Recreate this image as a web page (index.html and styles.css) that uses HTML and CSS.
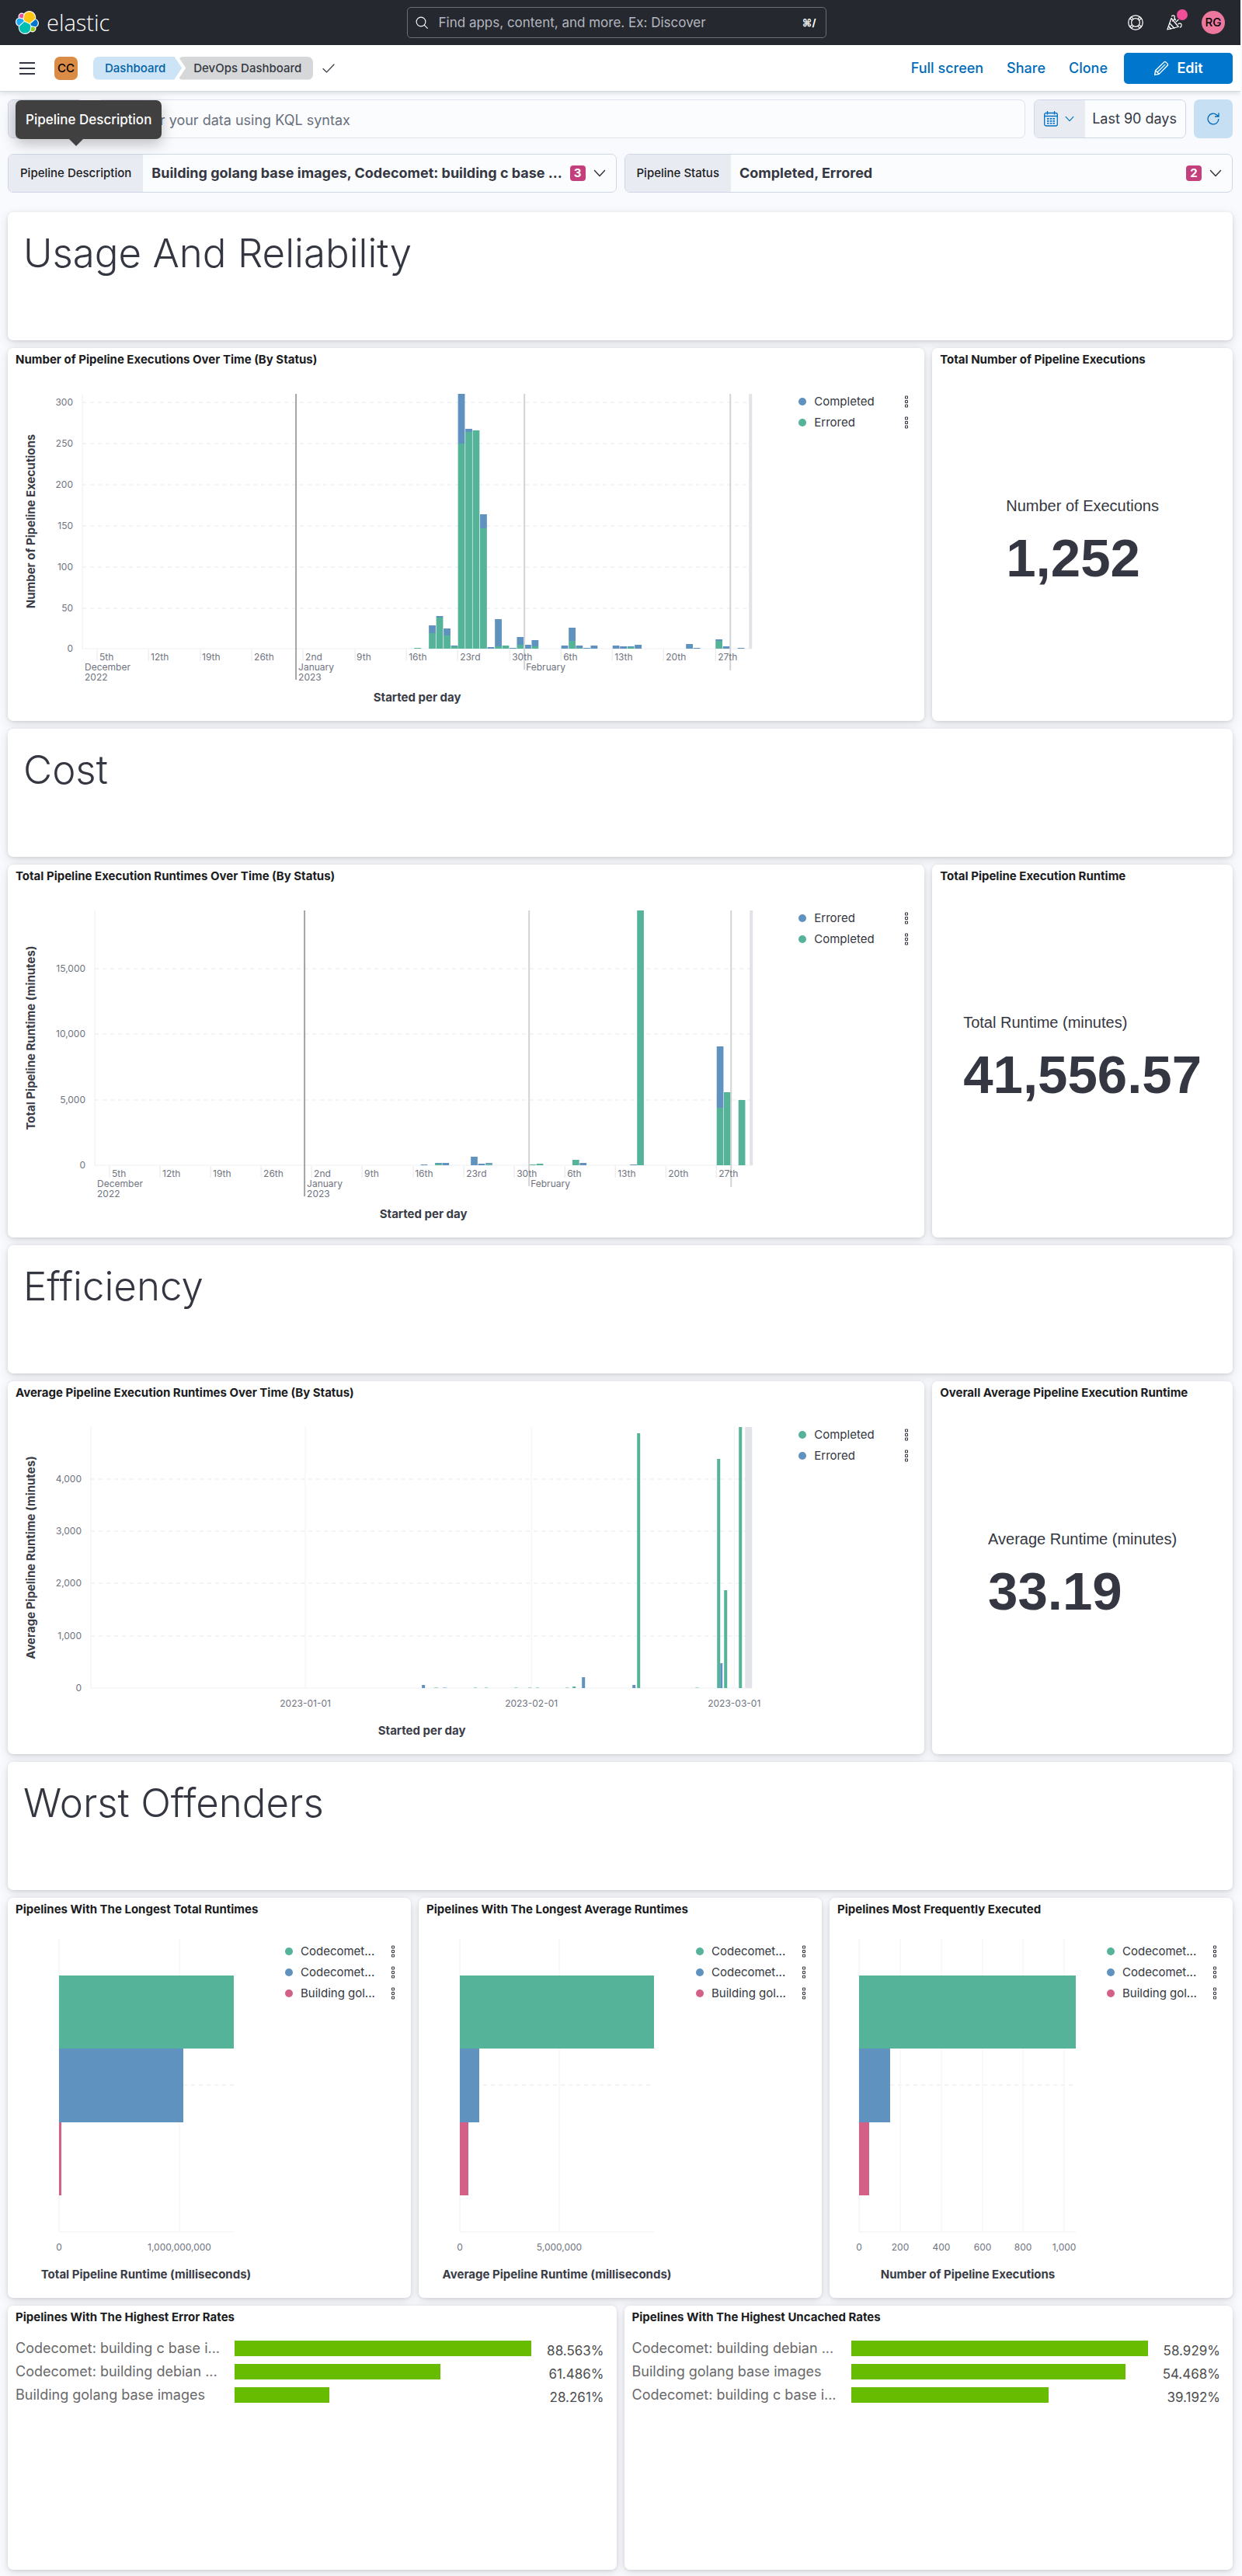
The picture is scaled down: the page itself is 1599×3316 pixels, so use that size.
FILE: index.html
```html
<!DOCTYPE html>
<html lang="en">
<head>
<meta charset="utf-8">
<meta name="viewport" content="width=device-width, initial-scale=1">
<title>DevOps Dashboard - Elastic</title>
<link rel="stylesheet" href="styles.css">
</head>
<body>
<svg class="sprite" aria-hidden="true">
  <symbol id="chevron" viewBox="0 0 16 16"><path d="M1.5 4.5l6.5 7 6.5-7" fill="none" stroke="currentColor" stroke-width="1.5" stroke-linecap="round" stroke-linejoin="round"/></symbol>
  <symbol id="dots" viewBox="0 0 16 16"><path d="M6.500 1h3v3h-3zM6.500 6.500h3v3h-3zM6.500 12h3v3h-3z" fill="none" stroke="currentColor" stroke-width="1"/></symbol>
</svg>

<header class="topbar">
  <a class="brand" href="#">
    <svg class="brand-mark" viewBox="0 0 32 32" aria-hidden="true">
      <path fill="#fff" d="M32 16.77c0-2.68-1.66-5.02-4.16-5.93.11-.57.16-1.14.16-1.73C28 4.1 23.92.02 18.9.02c-2.94 0-5.66 1.4-7.37 3.78a4.8 4.8 0 00-2.96-1.01 4.84 4.84 0 00-4.84 4.84c0 .58.1 1.14.3 1.66A6.36 6.36 0 000 15.24c0 2.69 1.67 5.04 4.18 5.94-.11.56-.16 1.13-.16 1.73 0 5.01 4.07 9.08 9.08 9.08 2.94 0 5.66-1.41 7.36-3.79a4.83 4.83 0 002.98 1.03 4.84 4.84 0 004.84-4.84c0-.58-.1-1.14-.3-1.66A6.38 6.38 0 0032 16.77"/>
      <path fill="#fec514" d="M12.58 13.79l7.01 3.2 7.08-6.2c.1-.51.15-1.03.15-1.57 0-4.34-3.53-7.86-7.87-7.86a7.86 7.86 0 00-6.5 3.44L11.28 10.9z"/>
      <path fill="#00bfb3" d="M5.33 21.22c-.1.51-.15 1.04-.15 1.58 0 4.35 3.54 7.89 7.89 7.89 2.62 0 5.06-1.3 6.53-3.47l1.17-6.08-1.56-2.98-7.03-3.2z"/>
      <path fill="#f04e98" d="M5.29 9.09l4.8 1.13 1.05-5.46a3.79 3.79 0 00-6.09 3.03c0 .45.08.89.24 1.3"/>
      <path fill="#1ba9f5" d="M4.87 10.23a5.35 5.35 0 00-3.53 5.03c0 2.21 1.36 4.19 3.42 4.98l6.74-6.09-1.24-2.64z"/>
      <path fill="#93c90e" d="M20.87 27.22a3.77 3.77 0 002.29.79 3.79 3.79 0 003.79-3.79c0-.46-.08-.89-.24-1.3l-4.8-1.12z"/>
      <path fill="#07c" d="M21.84 20.48l5.28 1.24a5.38 5.38 0 003.54-5.03c0-2.21-1.37-4.18-3.42-4.96l-6.9 6.05z"/>
    </svg>
    <span class="brand-name">elastic</span>
  </a>
  <label class="global-search">
    <svg class="icon-16" viewBox="0 0 16 16" aria-hidden="true"><g fill="none" stroke="currentColor" stroke-width="1.1" stroke-linecap="round"><circle cx="7" cy="7" r="5.9"/><path d="M11.3 11.3l4 4"/></g></svg>
    <input type="search" class="global-search-input" aria-label="Find apps and content" placeholder="Find apps, content, and more. Ex: Discover">
    <kbd class="shortcut">⌘/</kbd>
  </label>
  <nav class="top-actions" aria-label="Account">
    <button class="top-button" type="button" aria-label="Help">
      <svg class="icon-20" viewBox="0 0 16 16" aria-hidden="true"><g fill="none" stroke="currentColor"><circle cx="8" cy="8" r="7.4"/><circle cx="8" cy="8" r="4.3"/><path d="M3.4 1.9l2.2 2.4M1.9 3.4l2.4 2.2M12.6 1.9l-2.2 2.4M14.1 3.4l-2.4 2.2M3.4 14.1l2.2-2.4M1.9 12.6l2.4-2.2M12.6 14.1l-2.2-2.4M14.1 12.6l-2.4-2.2"/></g></svg>
    </button>
    <button class="top-button" type="button" aria-label="What's new">
      <svg class="icon-20" viewBox="0 0 16 16" aria-hidden="true"><g fill="none" stroke="currentColor" stroke-linejoin="round" stroke-linecap="round"><path d="M.7 15.2l4.1-11.6 7.4 8.8z"/><path d="M3.3 9l4.5 4.8M2.2 12l2.2 2.6M6 6.5l2.6-2.3M5.3 1.4c1.5-1.5 3.3-.3 2.8 1.2-.4 1.300 1 1.600 1 2.900M9.700 7.200l2.300-2M12 9.500c1-1.200 3.400-.6 3.300 1.200 0 1.400-.8 2-1.500 2.200"/></g></svg>
      <span class="news-dot"></span>
    </button>
    <button class="avatar" type="button" aria-label="Account menu">RG</button>
  </nav>
</header>

<div class="navbar">
  <button class="plain-button" type="button" aria-label="Toggle navigation">
    <svg class="icon-20" viewBox="0 0 20 20" aria-hidden="true"><path d="M0 3h20M0 10h20M0 17h20" stroke="currentColor" stroke-width="2"/></svg>
  </button>
  <button class="space" type="button" aria-label="Space">CC</button>
  <nav class="crumbs" aria-label="Breadcrumbs">
    <a class="crumb crumb-first" href="#">Dashboard</a>
    <span class="crumb crumb-last" aria-current="page">DevOps Dashboard</span>
  </nav>
  <svg class="icon-16 saved" viewBox="0 0 16 16" aria-hidden="true"><path d="M1 8.500l4.500 4.500L15 3" fill="none" stroke="currentColor" stroke-width="1.200" stroke-linecap="round"/></svg>
  <nav class="nav-links" aria-label="Dashboard actions">
    <a href="#">Full screen</a>
    <a href="#">Share</a>
    <a href="#">Clone</a>
  </nav>
  <button class="edit-button" type="button">
    <svg class="icon-20" viewBox="0 0 16 16" aria-hidden="true"><path d="M1.300 14.700l.8-4.500 8.700-8.500a1.500 1.500 0 012.100 0l1.400 1.400a1.500 1.500 0 010 2.100l-8.600 8.700zM2.200 10.300l3.500 3.500M4.200 11.800l7.900-7.900" fill="none" stroke="currentColor" stroke-width="1.100" stroke-linejoin="round"/></svg>
    Edit
  </button>
</div>

<main class="page">
  <div class="query-row">
    <button class="filter-button" type="button" aria-label="Saved query menu"></button>
    <input class="query-input" type="text" aria-label="Query" placeholder="Filter your data using KQL syntax">
    <div class="date-picker">
      <button class="date-quick" type="button" aria-label="Date quick select">
        <svg class="icon-20" viewBox="0 0 18 20" aria-hidden="true"><g fill="none" stroke="currentColor" stroke-width="1.300"><rect x=".7" y="2.500" width="16.600" height="16.500" rx="2"/><path d="M1 6.500h16M4.500 0v4.500M13.500 0v4.500"/></g><path d="M4 9h2.500v1.800H4zM7.800 9h2.500v1.800H7.800zM11.500 9H14v1.800h-2.500zM4 12h2.500v1.800H4zM7.800 12h2.500v1.800H7.800zM11.500 12H14v1.800h-2.500zM4 15h2.500v1.500H4zM7.800 15h2.500v1.500H7.800zM11.500 15H14v1.500h-2.500z" fill="currentColor"/></svg>
        <svg class="icon-12" aria-hidden="true"><use href="#chevron"/></svg>
      </button>
      <button class="date-range" type="button">Last 90 days</button>
    </div>
    <button class="refresh" type="button" aria-label="Refresh">
      <svg class="icon-16" viewBox="0 0 16 16" aria-hidden="true"><path d="M14.900 8A6.900 6.900 0 1 1 12.600 2.900L14.500 4.500M15 .2V5h-5" fill="none" stroke="currentColor" stroke-width="1.300"/></svg>
    </button>
  </div>

  <div class="control-row">
    <div class="control">
      <span class="control-label" id="lbl-desc">Pipeline Description</span>
      <button class="control-value" type="button" aria-labelledby="lbl-desc">
        <span class="control-text">Building golang base images, Codecomet: building c base ...</span>
        <span class="badge">3</span>
        <svg class="icon-16" aria-hidden="true"><use href="#chevron"/></svg>
      </button>
      <div class="tooltip" role="tooltip">Pipeline Description</div>
    </div>
    <div class="control">
      <span class="control-label" id="lbl-status">Pipeline Status</span>
      <button class="control-value" type="button" aria-labelledby="lbl-status">
        <span class="control-text">Completed, Errored</span>
        <span class="badge">2</span>
        <svg class="icon-16" aria-hidden="true"><use href="#chevron"/></svg>
      </button>
    </div>
  </div>

  <div class="dashboard">
    <section class="panel heading-panel"><h1>Usage And Reliability</h1></section>

    <div class="row row-wide">
      <section class="panel">
        <h2>Number of Pipeline Executions Over Time (By Status)</h2>
        <div class="chart">
          <svg class="plot" viewBox="0 0 1007 450" role="img" aria-label="Number of pipeline executions per day">
            <path class="grid dashed" d="M96 40H958M96 93H958M96 146H958M96 199H958M96 252H958M96 305H958"/>
            <path class="axis" d="M96 29V357H958"/>
            <path class="tickline" d="M115 358v15M181 358v15M248 358v15M314 358v15M380 358v15M447 358v15M513 358v15M579 358v15M646 358v15M712 358v15M778 358v15M844 358v15M911 358v15"/>
            <path class="band" d="M954 29h4V357h-4z"/>
            <path class="green" d="M523.100 357v-1h8.800v1zM542 357v-20h8.800v20zM551.500 357v-40h8.800v40zM561 357v-17h8.800v17zM570.400 357v-3h8.800v3zM579.500 357V93h8.800V357zM589 357V78h8.800V357zM598.400 357V76h8.800V357zM607.900 357V202h8.800V357zM627 357v-3h8.800v3zM636.400 357v-4h8.800v4zM655.300 357v-5h8.800v5zM674.300 357v-3h8.800v3zM722 357v-10h8.800v10zM731.300 357v-1h8.800v1zM797.500 357v-2h8.800v2zM911 357v-10h8.800v10z"/>
            <path class="blue" d="M542 337v-10h8.800v10zM551.500 317v-2h8.800v2zM561 340v-9h8.800v9zM570.400 354v-1h8.800v1zM579.500 93V29h8.800V93zM589 78v-4h8.800v4zM607.900 202v-18h8.800v18zM617.400 357v-2h8.800v2zM627 354v-35h8.800v35zM645.900 357v-1h8.800v1zM655.300 352v-10h8.800v10zM664.800 357v-5h8.800v5zM674.300 354v-8h8.800v8zM712.400 357v-4h8.800v4zM722 347v-17h8.800v17zM731.300 356v-3h8.800v3zM740.800 357v-1h8.800v1zM750.300 357v-4h8.800v4zM778.500 357v-4h8.800v4zM788 357v-3h8.800v3zM797.500 355v-1h8.800v1zM807 357v-5h8.800v5zM873 357v-6h8.800v6zM882.500 357v-1h8.800v1zM911 347v-2h8.800v2zM920.500 357v-3h8.800v3zM939.500 357v-1h8.800v1z"/>
            <path class="year-line" d="M371 29V397"/>
            <path class="month-line" d="M665 29V384M930 29V385"/>
            <g class="tick end"><text x="84" y="44">300</text><text x="84" y="97">250</text><text x="84" y="150">200</text><text x="84" y="203">150</text><text x="84" y="256">100</text><text x="84" y="309">50</text><text x="84" y="361">0</text></g>
            <g class="tick"><text x="118" y="372">5th</text><text x="184" y="372">12th</text><text x="250" y="372">19th</text><text x="317" y="372">26th</text><text x="383" y="372">2nd</text><text x="449" y="372">9th</text><text x="516" y="372">16th</text><text x="582" y="372">23rd</text><text x="649" y="372">30th</text><text x="715" y="372">6th</text><text x="781" y="372">13th</text><text x="847" y="372">20th</text><text x="914" y="372">27th</text><text x="99" y="385">December</text><text x="99" y="398">2022</text><text x="374" y="385">January</text><text x="374" y="398">2023</text><text x="667" y="385">February</text></g>
            <text class="axis-title" transform="translate(35 193) rotate(-90)">Number of Pipeline Executions</text>
            <text class="axis-title" x="527" y="425">Started per day</text>
          </svg>
          <ul class="legend">
            <li><i class="dot dot-blue"></i><span>Completed</span><button type="button" aria-label="Completed actions"><svg class="icon-16"><use href="#dots"/></svg></button></li>
            <li><i class="dot dot-green"></i><span>Errored</span><button type="button" aria-label="Errored actions"><svg class="icon-16"><use href="#dots"/></svg></button></li>
          </ul>
        </div>
      </section>
      <section class="panel">
        <h2>Total Number of Pipeline Executions</h2>
        <div class="metric"><div><p class="metric-label">Number of Executions</p><p class="metric-value">1,252</p></div></div>
      </section>
    </div>

    <section class="panel heading-panel"><h1>Cost</h1></section>

    <div class="row row-wide">
      <section class="panel">
        <h2>Total Pipeline Execution Runtimes Over Time (By Status)</h2>
        <div class="chart">
          <svg class="plot" viewBox="0 0 1007 450" role="img" aria-label="Total pipeline runtime per day">
            <path class="grid dashed" d="M112 104H958M112 188H958M112 273H958"/>
            <path class="axis" d="M112 29V357H958"/>
            <path class="tickline" d="M131 358v15M196 358v15M261 358v15M326 358v15M391 358v15M456 358v15M522 358v15M587 358v15M652 358v15M717 358v15M782 358v15M847 358v15M912 358v15"/>
            <path class="band" d="M955 29h4V357h-4z"/>
            <path class="green" d="M550 357v-2h8.700v2zM615 357v-1.500h8.700v1.500zM671 357v-1h8.700v1zM680.500 357v-2h8.700v2zM726.800 357v-7h8.700v7zM810 357V29h8.700V357zM912.500 357v-74h8.700v74zM921.800 357v-94h8.700v94zM940.500 357v-84h8.700v84z"/>
            <path class="blue" d="M531.500 357v-1h8.700v1zM550 355v-1h8.700v1zM559.300 357v-3h8.700v3zM596 357v-11h8.700v11zM605.500 357v-2h8.700v2zM615 355.500v-1.500h8.700v1.500zM736.200 357v-3h8.700v3zM801 357v-1h8.700v1zM912.500 283v-79h8.700v79z"/>
            <path class="year-line" d="M382 29V397"/>
            <path class="month-line" d="M671 29V384M931 29V385"/>
            <g class="tick end"><text x="100" y="108">15,000</text><text x="100" y="192">10,000</text><text x="100" y="277">5,000</text><text x="100" y="361">0</text></g>
            <g class="tick"><text x="134" y="372">5th</text><text x="199" y="372">12th</text><text x="264" y="372">19th</text><text x="329" y="372">26th</text><text x="394" y="372">2nd</text><text x="459" y="372">9th</text><text x="524" y="372">16th</text><text x="590" y="372">23rd</text><text x="655" y="372">30th</text><text x="720" y="372">6th</text><text x="785" y="372">13th</text><text x="850" y="372">20th</text><text x="915" y="372">27th</text><text x="115" y="385">December</text><text x="115" y="398">2022</text><text x="385" y="385">January</text><text x="385" y="398">2023</text><text x="673" y="385">February</text></g>
            <text class="axis-title" transform="translate(35 193) rotate(-90)">Total Pipeline Runtime (minutes)</text>
            <text class="axis-title" x="535" y="425">Started per day</text>
          </svg>
          <ul class="legend">
            <li><i class="dot dot-blue"></i><span>Errored</span><button type="button" aria-label="Errored actions"><svg class="icon-16"><use href="#dots"/></svg></button></li>
            <li><i class="dot dot-green"></i><span>Completed</span><button type="button" aria-label="Completed actions"><svg class="icon-16"><use href="#dots"/></svg></button></li>
          </ul>
        </div>
      </section>
      <section class="panel">
        <h2>Total Pipeline Execution Runtime</h2>
        <div class="metric"><div><p class="metric-label">Total Runtime (minutes)</p><p class="metric-value">41,556.57</p></div></div>
      </section>
    </div>

    <section class="panel heading-panel"><h1>Efficiency</h1></section>

    <div class="row row-wide">
      <section class="panel">
        <h2>Average Pipeline Execution Runtimes Over Time (By Status)</h2>
        <div class="chart">
          <svg class="plot" viewBox="0 0 1007 450" role="img" aria-label="Average pipeline runtime per day">
            <path class="grid dashed" d="M107 96H958M107 163H958M107 230H958M107 298H958"/>
            <path class="grid" d="M383 29V365M674 29V365M935 29V365"/>
            <path class="axis" d="M107 29V365H958"/>
            <path class="band" d="M949 29h9V365h-9z"/>
            <path class="green" d="M549 365v-.7h5v.7zM600 365v-.7h4v.7zM614 365v-.7h4v.7zM652 365v-.7h4v.7zM670 365v-.7h4v.7zM680 365v-.7h4v.7zM718 365v-.7h4v.7zM727 365v-2h4v2zM810 365V37h4V365zM885 365v-.7h4v.7zM913 365V70h4V365zM922 365V239h4V365zM941 365V29h4V365z"/>
            <path class="blue" d="M533 365v-4h4v4zM560 365v-.7h5v.7zM739 365v-14h4v14zM804 365v-4h4v4zM917 365v-32h3v32z"/>
            <g class="tick end"><text x="95" y="100">4,000</text><text x="95" y="167">3,000</text><text x="95" y="234">2,000</text><text x="95" y="302">1,000</text><text x="95" y="369">0</text></g>
            <g class="tick middle"><text x="383" y="389">2023-01-01</text><text x="674" y="389">2023-02-01</text><text x="935" y="389">2023-03-01</text></g>
            <text class="axis-title" transform="translate(35 197) rotate(-90)">Average Pipeline Runtime (minutes)</text>
            <text class="axis-title" x="533" y="425">Started per day</text>
          </svg>
          <ul class="legend">
            <li><i class="dot dot-green"></i><span>Completed</span><button type="button" aria-label="Completed actions"><svg class="icon-16"><use href="#dots"/></svg></button></li>
            <li><i class="dot dot-blue"></i><span>Errored</span><button type="button" aria-label="Errored actions"><svg class="icon-16"><use href="#dots"/></svg></button></li>
          </ul>
        </div>
      </section>
      <section class="panel">
        <h2>Overall Average Pipeline Execution Runtime</h2>
        <div class="metric"><div><p class="metric-label">Average Runtime (minutes)</p><p class="metric-value">33.19</p></div></div>
      </section>
    </div>

    <section class="panel heading-panel"><h1>Worst Offenders</h1></section>

    <div class="row row-thirds">
      <section class="panel">
        <h2>Pipelines With The Longest Total Runtimes</h2>
        <div class="chart">
          <svg class="plot" viewBox="0 0 346 485" role="img" aria-label="Pipelines by total runtime">
            <path class="grid" d="M221 23V399"/><path class="grid dashed" d="M66 211H291"/>
            <path class="axis" d="M66 23V400H291"/>
            <path class="green" d="M66 70h225v94H66z"/><path class="blue" d="M66 164h160v95H66z"/><path class="pink" d="M66 259h3v94h-3z"/>
            <g class="tick middle"><text x="66" y="424">0</text><text x="221" y="424">1,000,000,000</text></g>
            <text class="axis-title" x="178" y="460">Total Pipeline Runtime (milliseconds)</text>
          </svg>
          <ul class="legend">
            <li><i class="dot dot-green"></i><span>Codecomet...</span><button type="button" aria-label="Series actions"><svg class="icon-16"><use href="#dots"/></svg></button></li>
            <li><i class="dot dot-blue"></i><span>Codecomet...</span><button type="button" aria-label="Series actions"><svg class="icon-16"><use href="#dots"/></svg></button></li>
            <li><i class="dot dot-pink"></i><span>Building gol...</span><button type="button" aria-label="Series actions"><svg class="icon-16"><use href="#dots"/></svg></button></li>
          </ul>
        </div>
      </section>
      <section class="panel">
        <h2>Pipelines With The Longest Average Runtimes</h2>
        <div class="chart">
          <svg class="plot" viewBox="0 0 346 485" role="img" aria-label="Pipelines by average runtime">
            <path class="grid" d="M181 23V399"/><path class="grid dashed" d="M53 211H303"/>
            <path class="axis" d="M53 23V400H303"/>
            <path class="green" d="M53 70h250v94H53z"/><path class="blue" d="M53 164h25v95H53z"/><path class="pink" d="M53 259h11v94H53z"/>
            <g class="tick middle"><text x="53" y="424">0</text><text x="181" y="424">5,000,000</text></g>
            <text class="axis-title" x="178" y="460">Average Pipeline Runtime (milliseconds)</text>
          </svg>
          <ul class="legend">
            <li><i class="dot dot-green"></i><span>Codecomet...</span><button type="button" aria-label="Series actions"><svg class="icon-16"><use href="#dots"/></svg></button></li>
            <li><i class="dot dot-blue"></i><span>Codecomet...</span><button type="button" aria-label="Series actions"><svg class="icon-16"><use href="#dots"/></svg></button></li>
            <li><i class="dot dot-pink"></i><span>Building gol...</span><button type="button" aria-label="Series actions"><svg class="icon-16"><use href="#dots"/></svg></button></li>
          </ul>
        </div>
      </section>
      <section class="panel">
        <h2>Pipelines Most Frequently Executed</h2>
        <div class="chart">
          <svg class="plot" viewBox="0 0 346 485" role="img" aria-label="Pipelines by number of executions">
            <path class="grid" d="M91 23V399M144 23V399M197 23V399M249 23V399M302 23V399"/><path class="grid dashed" d="M38 211H317"/>
            <path class="axis" d="M38 23V400H317"/>
            <path class="green" d="M38 70h279v94H38z"/><path class="blue" d="M38 164h40v95H38z"/><path class="pink" d="M38 259h13v94H38z"/>
            <g class="tick middle"><text x="38" y="424">0</text><text x="91" y="424">200</text><text x="144" y="424">400</text><text x="197" y="424">600</text><text x="249" y="424">800</text><text x="302" y="424">1,000</text></g>
            <text class="axis-title" x="178" y="460">Number of Pipeline Executions</text>
          </svg>
          <ul class="legend">
            <li><i class="dot dot-green"></i><span>Codecomet...</span><button type="button" aria-label="Series actions"><svg class="icon-16"><use href="#dots"/></svg></button></li>
            <li><i class="dot dot-blue"></i><span>Codecomet...</span><button type="button" aria-label="Series actions"><svg class="icon-16"><use href="#dots"/></svg></button></li>
            <li><i class="dot dot-pink"></i><span>Building gol...</span><button type="button" aria-label="Series actions"><svg class="icon-16"><use href="#dots"/></svg></button></li>
          </ul>
        </div>
      </section>
    </div>

    <div class="row row-halves">
      <section class="panel">
        <h2>Pipelines With The Highest Error Rates</h2>
        <ul class="rates">
          <li><span class="rate-name">Codecomet: building c base i...</span><span class="rate-track"><span class="rate-bar" style="width:100%"></span></span><span class="rate-value">88.563%</span></li>
          <li><span class="rate-name">Codecomet: building debian ...</span><span class="rate-track"><span class="rate-bar" style="width:69.4%"></span></span><span class="rate-value">61.486%</span></li>
          <li><span class="rate-name">Building golang base images</span><span class="rate-track"><span class="rate-bar" style="width:31.9%"></span></span><span class="rate-value">28.261%</span></li>
        </ul>
      </section>
      <section class="panel">
        <h2>Pipelines With The Highest Uncached Rates</h2>
        <ul class="rates">
          <li><span class="rate-name">Codecomet: building debian ...</span><span class="rate-track"><span class="rate-bar" style="width:100%"></span></span><span class="rate-value">58.929%</span></li>
          <li><span class="rate-name">Building golang base images</span><span class="rate-track"><span class="rate-bar" style="width:92.4%"></span></span><span class="rate-value">54.468%</span></li>
          <li><span class="rate-name">Codecomet: building c base i...</span><span class="rate-track"><span class="rate-bar" style="width:66.5%"></span></span><span class="rate-value">39.192%</span></li>
        </ul>
      </section>
    </div>
  </div>
</main>
</body>
</html>
```
FILE: styles.css
```css
* { box-sizing: border-box; }
body {
  margin: 0 2px 0 0;
  background: #f9fafe;
  color: #343741;
  font-family: Inter, "Liberation Sans", sans-serif;
  font-size: 18px;
  line-height: 24px;
}
button, input { font: inherit; color: inherit; }
button { border: 0; padding: 0; background: none; cursor: pointer; }
a { color: inherit; text-decoration: none; }
ul { list-style: none; margin: 0; padding: 0; }
h1, h2, p { margin: 0; }
svg { display: block; flex: none; }
.sprite { width: 0; height: 0; position: absolute; }
.icon-12 { width: 12px; height: 12px; }
.icon-16 { width: 16px; height: 16px; }
.icon-20 { width: 20px; height: 20px; }

.topbar {
  display: grid;
  grid-template-columns: 1fr 540px 1fr;
  align-items: center;
  height: 58px;
  padding: 0 20px 0 10px;
  background: #25282f;
  color: #fff;
  font-size: 17px;
}
.brand { display: flex; align-items: center; gap: 10px; padding-left: 10px; }
.brand-mark { width: 30px; height: 30px; }
.brand-name { font-family: "Open Sans", sans-serif; font-weight: 300; font-size: 29px; line-height: 30px; }
.global-search {
  display: flex;
  align-items: center;
  gap: 14px;
  height: 40px;
  padding: 0 12px 0 10px;
  border: 1px solid #6b6e76;
  border-radius: 5px;
}
.global-search-input {
  flex: 1;
  min-width: 0;
  padding: 0;
  border: 0;
  outline: 0;
  background: none;
}
.global-search-input::placeholder { color: #b4b7bf; opacity: 1; }
.shortcut { font-family: inherit; font-size: 13px; font-weight: 700; }
.top-actions { display: flex; justify-content: flex-end; align-items: center; gap: 30px; }
.top-button { position: relative; }
.news-dot {
  position: absolute;
  top: -7px;
  right: -7px;
  width: 14px;
  height: 14px;
  border-radius: 50%;
  background: #f04e98;
}
.avatar {
  width: 30px;
  height: 30px;
  margin-left: -5px;
  border-radius: 50%;
  background: #ee789d;
  color: #000;
  font-size: 15px;
  font-weight: 500;
}

.navbar {
  position: relative;
  display: flex;
  align-items: center;
  height: 60px;
  padding: 0 10px 0 25px;
  border-bottom: 1px solid #d3dae6;
  background: #fff;
  box-shadow: 0 2px 6px rgba(0, 0, 0, .12);
}
.space {
  width: 30px;
  height: 30px;
  margin: 0 20px 0 25px;
  border-radius: 7px;
  background: #da8b45;
  color: #000;
  font-size: 15px;
  font-weight: 500;
}
.crumbs { display: flex; font-size: 15px; font-weight: 500; line-height: 30px; }
.crumb { border-radius: 7px; }
.crumb-first {
  padding: 0 21px 0 15px;
  background: #cce4f5;
  color: #0061a6;
  clip-path: polygon(0 0, calc(100% - 10px) 0, 100% 50%, calc(100% - 10px) 100%, 0 100%);
}
.crumb-last {
  margin-left: -5px;
  padding: 0 15px 0 20px;
  background: #d6d7d9;
  clip-path: polygon(0 0, 100% 0, 100% 100%, 0 100%, 10px 50%);
}
.saved { margin-left: 12px; }
.nav-links {
  display: flex;
  gap: 30px;
  margin: 0 21px 0 auto;
  color: #006bb8;
  font-weight: 500;
}
.edit-button {
  display: flex;
  align-items: center;
  justify-content: center;
  gap: 10px;
  width: 140px;
  height: 40px;
  border-radius: 5px;
  background: #0077cc;
  color: #fff;
  font-weight: 600;
}

.page { padding: 10px 10px 8px; }
.query-row { display: flex; height: 50px; }
.filter-button { width: 97px; margin-right: 18px; border: 1px solid #cfd6e6; border-radius: 7px; background: #e9ebf3; }
.query-input {
  flex: 1;
  min-width: 0;
  margin-right: 11px;
  padding: 3px 15px 0 44px;
  border: 1px solid #dfe3ee;
  border-radius: 7px;
  background: #fbfcfe;
  outline: 0;
}
.query-input::placeholder { color: #69707d; opacity: 1; }
.date-picker {
  display: flex;
  margin-right: 10px;
  border: 1px solid #cfd6e6;
  border-radius: 7px;
  background: #fbfcfe;
  overflow: hidden;
}
.date-quick {
  display: flex;
  align-items: center;
  gap: 8px;
  padding: 0 14px 0 11px;
  background: #e9ebf3;
  color: #0071c2;
}
.date-range { padding: 0 11px 0 9px; white-space: nowrap; }
.refresh {
  display: flex;
  align-items: center;
  justify-content: center;
  width: 50px;
  border-radius: 7px;
  background: #c6dff2;
  color: #006bb8;
}

.control-row { display: grid; grid-template-columns: 1fr 1fr; gap: 10px; margin-top: 20px; }
.control {
  position: relative;
  display: flex;
  height: 50px;
  min-width: 0;
  border: 1px solid #cfd6e6;
  border-radius: 7px;
  background: #fbfcfe;
}
.control-label {
  display: flex;
  align-items: center;
  padding: 0 15px;
  border-radius: 6px 0 0 6px;
  background: #e9ebf3;
  color: #1a1c21;
  font-size: 15px;
  font-weight: 500;
  white-space: nowrap;
}
.control-value {
  display: flex;
  flex: 1;
  align-items: center;
  gap: 10px;
  min-width: 0;
  padding: 0 13px 0 11px;
  font-weight: 700;
  text-align: left;
}
.control-text { flex: 1; white-space: nowrap; }
.badge {
  width: 20px;
  height: 20px;
  border-radius: 4px;
  background: #c4407c;
  color: #fff;
  font-size: 15px;
  line-height: 20px;
  text-align: center;
}
.tooltip {
  position: absolute;
  bottom: 68px;
  left: 9px;
  padding: 13px;
  border-radius: 7px;
  background: #404040;
  box-shadow: 0 6px 18px rgba(0, 0, 0, .25);
  color: #fff;
  font-size: 17px;
  font-weight: 500;
  white-space: nowrap;
}
.tooltip::after {
  content: "";
  position: absolute;
  top: 100%;
  left: 69px;
  border: 9px solid transparent;
  border-top-color: #404040;
  border-bottom: 0;
}

.dashboard { display: grid; gap: 10px; margin-top: 25px; }
.row { display: grid; gap: 10px; }
.row-wide { grid-template-columns: repeat(4, 1fr); }
.row-wide > :first-child { grid-column: span 3; }
.row-thirds { grid-template-columns: repeat(3, 1fr); }
.row-halves { grid-template-columns: repeat(2, 1fr); }
.panel {
  min-width: 0;
  border-radius: 7px;
  background: #fff;
  box-shadow: 0 1px 4px rgba(0, 0, 0, .1), 0 4px 14px rgba(0, 0, 0, .11);
}
.row-wide .panel { min-height: 480px; }
.row-thirds .panel { min-height: 515px; }
.row-halves .panel { min-height: 340px; }
.heading-panel { min-height: 165px; padding: 21px 20px; }
.heading-panel h1 { font-size: 51px; font-weight: 300; line-height: 64px; font-optical-sizing: none; }
.panel h2 {
  padding: 0 10px;
  color: #1a1c21;
  font-size: 15px;
  font-weight: 700;
  line-height: 30px;
  white-space: nowrap;
}

.chart { display: flex; align-items: flex-start; }
.plot { flex: 1; min-width: 0; overflow: visible; }
.grid { fill: none; stroke: #f0f2f4; stroke-width: 1; }
.dashed { stroke-width: 2; stroke-dasharray: 5 5; stroke: #f3f4f6; }
.axis { fill: none; stroke: #eceff2; stroke-width: 1; }
.tickline { stroke: #e4e7ec; stroke-width: 1; }
.year-line { stroke: #a3a3a7; stroke-width: 2; }
.month-line { stroke: #d2d3d6; stroke-width: 2; }
.band { fill: #e2e3e8; }
.green { fill: #54b399; }
.blue { fill: #6092c0; }
.pink { fill: #d36086; }
.tick { fill: #6f7480; font-size: 12px; }
.end { text-anchor: end; }
.middle { text-anchor: middle; }
.axis-title { fill: #3a3d47; font-size: 15px; font-weight: 700; text-anchor: middle; }

.legend { width: 173px; padding: 25px 15px 0 11px; font-size: 15px; }
.legend li { display: flex; align-items: center; height: 27px; }
.legend span { flex: 1; white-space: nowrap; }
.legend button { color: #343741; }
.dot { width: 10px; height: 10px; margin-right: 10px; border-radius: 50%; }
.dot-green { background: #54b399; }
.dot-blue { background: #6092c0; }
.dot-pink { background: #d36086; }

.metric {
  display: flex;
  align-items: center;
  justify-content: center;
  height: 450px;
  font-family: "Liberation Sans", Arial, sans-serif;
}
.metric-label { font-size: 20px; line-height: 30px; }
.metric-value { font-size: 69px; font-weight: 700; line-height: 105px; }

.rates { padding: 10px 10px 0; }
.rates li {
  display: grid;
  grid-template-columns: 37fr 50fr 13fr;
  align-items: center;
  height: 30px;
  color: #69696b;
}
.rate-name { white-space: nowrap; }
.rate-bar { display: block; height: 20px; background: #68bc00; }
.rate-value { padding: 5px 6px 0 0; color: #4d4d4f; font-size: 17px; text-align: right; }
```
